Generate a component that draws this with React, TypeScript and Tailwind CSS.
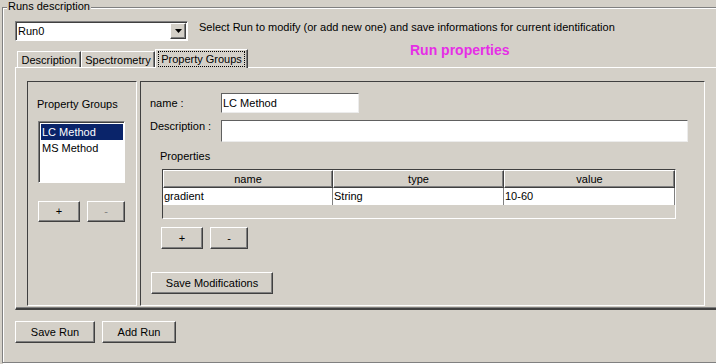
import React from 'react';

const raised =
  'border-t border-l border-white border-b border-r border-b-[#404040] border-r-[#404040] shadow-[inset_-1px_-1px_0_#808080]';

function Btn({ label, w, h, disabled }: { label: string; w: string; h: string; disabled?: boolean }) {
  return (
    <div className={`${w} ${h} ${raised} flex items-center justify-center bg-[#d4d0c8] ${disabled ? 'text-[#808080]' : 'text-black'}`}>
      {label}
    </div>
  );
}

function Tab({ label, w, selected }: { label: string; w: string; selected?: boolean }) {
  if (selected) {
    return (
      <div className={`${w} h-[19px] -mb-px relative z-10 bg-[#d4d0c8] border-t border-l border-white border-r border-r-[#404040] shadow-[inset_-1px_0_0_#808080] flex items-start justify-center pt-px`}>
        <span className="h-[16px] px-[2px] border border-dotted border-black leading-[14px]">{label}</span>
      </div>
    );
  }
  return (
    <div className={`${w} h-[16px] bg-[#d4d0c8] border-t border-l border-white border-r border-r-[#404040] shadow-[inset_-1px_0_0_#808080] flex items-center justify-center leading-[14px]`}>
      {label}
    </div>
  );
}

const columns = ['name', 'type', 'value'];
const rows = [['gradient', 'String', '10-60']];

export default function App() {
  return (
    <div
      className="w-[716px] h-[364px] overflow-hidden bg-[#d4d0c8] pt-[7px] pl-[2px] text-[11px] leading-[13px] text-black"
      style={{ fontFamily: '"Liberation Sans", Arial, sans-serif' }}
    >
      {/* titled border */}
      <div className="relative w-[760px] h-[356px] border border-[#808080] shadow-[inset_1px_1px_0_#fff,1px_1px_0_#fff]">
        <span className="absolute left-[4px] -top-[8px] px-px bg-[#d4d0c8]">Runs description</span>

        <div className="flex items-start mt-[13px] ml-[12px]">
          <div className="w-[173px] h-[20px] bg-white border-t border-l border-[#808080] border-b border-r border-b-white border-r-white shadow-[inset_1px_1px_0_#404040] flex items-center justify-between pl-[2px] pr-px">
            <span>Run0</span>
            <div className={`w-[16px] h-[16px] ${raised} bg-[#d4d0c8] flex items-center justify-center`}>
              <svg width="7" height="4" viewBox="0 0 7 4">
                <path d="M0 0h7L3.5 4z" fill="#000" />
              </svg>
            </div>
          </div>
          <span className="ml-[11px]">
            Select Run to modify (or add new one) and save informations for current identification
          </span>
        </div>

        <div className="flex items-end h-[18px] mt-[8px] ml-[14px]">
          <Tab label="Description" w="w-[64px]" />
          <Tab label="Spectrometry" w="w-[74px]" />
          <Tab label="Property Groups" w="w-[93px]" selected />
          <span className="ml-[162px] mb-[9px] leading-[16px] text-[14px] font-bold text-[#e62ee6]">Run properties</span>
        </div>

        {/* tab content */}
        <div className="ml-[12px] w-[760px] h-[243px] border-t border-l border-white border-b-2 border-b-[#404040] shadow-[inset_0_-1px_0_#808080] flex gap-[3px] pt-[13px] pl-[11px]">
          <div className="w-[110px] h-[225px] border-t border-l border-[#404040] border-b border-r border-b-white border-r-white flex flex-col">
            <span className="ml-[9px] mt-[16px]">Property Groups</span>
            <div className="ml-[10px] mt-[10px] w-[87px] h-[62px] bg-white border-t border-l border-[#808080] border-b border-r border-b-white border-r-white shadow-[inset_1px_1px_0_#404040] pt-px pl-px">
              <div className="h-[16px] mt-px ml-px mr-px bg-[#0a246a] text-white flex items-center pl-px">LC Method</div>
              <div className="h-[16px] ml-px flex items-center pl-px">MS Method</div>
            </div>
            <div className="flex gap-[7px] ml-[10px] mt-[18px]">
              <Btn label="+" w="w-[42px]" h="h-[21px]" />
              <Btn label="-" w="w-[38px]" h="h-[21px]" disabled />
            </div>
          </div>

          <div className="w-[565px] h-[225px] border-t border-l border-[#404040] border-b border-r border-b-white border-r-white flex flex-col">
            <div className="flex items-center mt-[11px] pl-[9px]">
              <span className="w-[71px]">name :</span>
              <div className="w-[138px] h-[20px] bg-white border-t border-l border-[#606060] border-b border-r border-b-[#ececec] border-r-[#ececec] flex items-center pl-px">
                LC Method
              </div>
            </div>
            <div className="flex items-center mt-[7px] pl-[9px]">
              <span className="w-[71px] -mt-[9px]">Description :</span>
              <div className="w-[467px] h-[22px] bg-white border-t border-l border-[#606060] border-b border-r border-b-[#ececec] border-r-[#ececec]" />
            </div>
            <span className="ml-[19px] mt-[8px]">Properties</span>

            <div className="ml-[21px] mt-[6px] w-[514px] h-[50px] border-t border-l border-[#404040] border-b border-r border-b-white border-r-white flex flex-col">
              <div className="flex h-[18px]">
                {columns.map((c, i) => (
                  <div key={c} className={`${i === 0 ? 'w-[170px]' : 'w-[171px]'} h-[18px] ${raised} flex items-center justify-center`}>
                    {c}
                  </div>
                ))}
              </div>
              {rows.map((r) => (
                <div key={r[0]} className="flex h-[17px] bg-white">
                  {r.map((v, i) => (
                    <div key={i} className={`${i === 0 ? 'w-[170px]' : 'w-[171px]'} h-[17px] border-r border-[#808080] flex items-center pl-px`}>
                      {v}
                    </div>
                  ))}
                </div>
              ))}
            </div>

            <div className="flex gap-[7px] ml-[20px] mt-[8px]">
              <Btn label="+" w="w-[42px]" h="h-[22px]" />
              <Btn label="-" w="w-[38px]" h="h-[22px]" />
            </div>
            <div className="ml-[10px] mt-[23px]">
              <Btn label="Save Modifications" w="w-[122px]" h="h-[22px]" />
            </div>
          </div>
        </div>

        <div className="flex gap-[7px] ml-[12px] mt-[11px]">
          <Btn label="Save Run" w="w-[80px]" h="h-[22px]" />
          <Btn label="Add Run" w="w-[74px]" h="h-[22px]" />
        </div>
      </div>
    </div>
  );
}
